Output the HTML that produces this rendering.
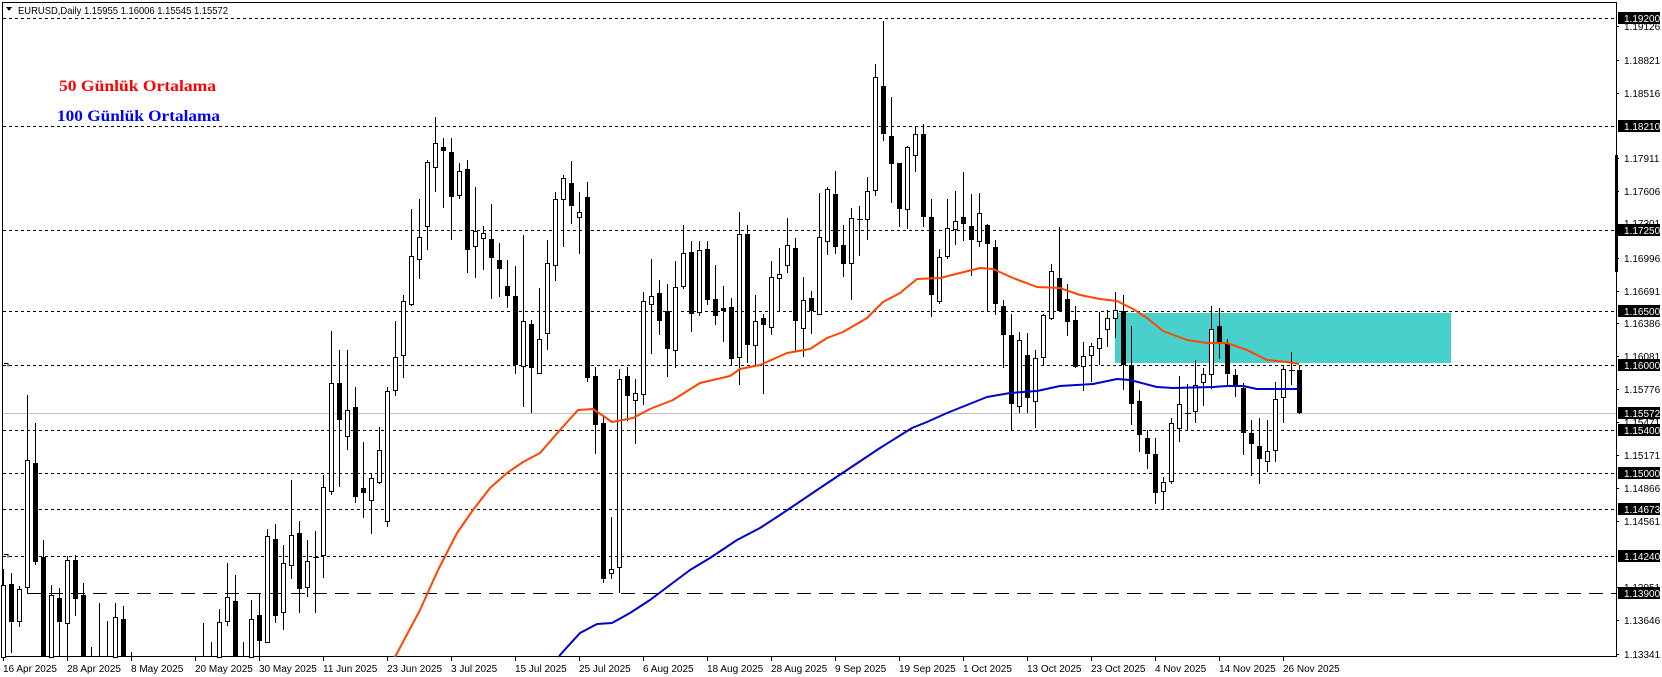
<!DOCTYPE html>
<html><head><meta charset="utf-8"><style>
html,body{margin:0;padding:0;background:#fff;}
svg{display:block;font-family:"Liberation Sans",sans-serif;}
</style></head><body>
<svg width="1662" height="677" viewBox="0 0 1662 677" xmlns="http://www.w3.org/2000/svg" shape-rendering="crispEdges">
<rect width="1662" height="677" fill="#fff"/>
<path d="M2.5 2.5H1616.5V656.5H2.5Z" fill="none" stroke="#000"/>
<rect x="1615" y="155" width="3" height="117" fill="#000"/>
<rect x="1115" y="313" width="336" height="50" fill="#48d1cc"/>
<g stroke="#000" stroke-dasharray="3 3">
<path d="M3 18.5H1616M3 126.5H1616M3 230.5H1616M3 311.5H1616M3 365.5H1616M3 430.5H1616M3 473.5H1616M3 509.5H1616M3 556.5H1616"/>
</g>
<path d="M27 593.5H1616" stroke="#000" stroke-dasharray="14 8"/>
<path d="M27.5 587V593" stroke="#000"/>
<path d="M3 413.5H1616" stroke="#c0c0c0"/>
<path d="M4 363.5h4v3M4 554.5h4v3" stroke="#000" fill="none"/>
<path stroke="#000" fill="none" d="M3.5 569V657M11.5 573V653M19.5 586V627M27.5 395V590M35.5 423V565M43.5 540V657M51.5 585V657M59.5 588V657M67.5 556V657M75.5 555V616M83.5 583V657M91.5 647V657M99.5 603V657M107.5 621V657M115.5 603V657M123.5 606V657M131.5 652V657M203.5 623V657M211.5 642V657M219.5 609V657M227.5 563V626M235.5 575V657M243.5 642V657M251.5 600V657M259.5 593V657M267.5 529V642M275.5 524V623M283.5 545V630M291.5 480V579M299.5 521V613M307.5 540V597M315.5 531V613M323.5 475V578M331.5 331V495M339.5 350V487M347.5 350V450M355.5 387V503M363.5 442V518M371.5 473V534M379.5 427V484M387.5 387V527M395.5 321V396M403.5 295V378M411.5 209V306M419.5 199V279M427.5 160V250M435.5 117V192M443.5 138V208M451.5 138V240M459.5 163V199M467.5 160V273M475.5 187V278M483.5 226V270M491.5 204V299M499.5 243V297M507.5 260V308M515.5 266V374M523.5 235V407M531.5 320V413M539.5 288V374M547.5 240V350M555.5 192V281M563.5 175V247M571.5 161V224M579.5 192V254M587.5 182V382M595.5 367V454M603.5 415V583M611.5 517V579M619.5 369V593M627.5 367V421M635.5 379V444M643.5 292V405M651.5 259V354M659.5 280V335M667.5 284V377M675.5 261V368M683.5 225V289M691.5 241V332M699.5 241V316M707.5 241V305M715.5 265V325M723.5 286V342M731.5 298V365M739.5 212V385M747.5 225V363M755.5 295V365M763.5 314V394M771.5 261V335M779.5 248V311M787.5 218V273M795.5 238V352M803.5 277V357M811.5 291V334M819.5 193V314M827.5 187V255M835.5 171V254M843.5 225V277M851.5 208V300M859.5 206V256M867.5 177V240M875.5 64V196M883.5 21V141M891.5 97V203M899.5 163V227M907.5 146V229M915.5 127V172M923.5 124V227M931.5 199V317M939.5 249V304M947.5 199V259M955.5 191V245M963.5 172V241M971.5 194V276M979.5 193V247M987.5 224V311M995.5 240V315M1003.5 300V368M1011.5 314V430M1019.5 332V413M1027.5 333V413M1035.5 350V428M1043.5 314V365M1051.5 264V320M1059.5 227V311M1067.5 284V336M1075.5 306V368M1083.5 342V391M1091.5 343V382M1099.5 312V365M1107.5 310V347M1115.5 292V338M1123.5 295V390M1131.5 326V425M1139.5 390V452M1147.5 430V469M1155.5 438V504M1163.5 477V509M1171.5 418V484M1179.5 376V442M1187.5 384V430M1195.5 360V423M1203.5 368V406M1211.5 306V389M1219.5 308V359M1227.5 339V386M1235.5 369V397M1243.5 383V455M1251.5 420V476M1259.5 418V484M1267.5 420V472M1275.5 382V462M1283.5 365V423M1291.5 352V385M1299.5 366V414"/>
<path stroke="#000" d="M313 557.5h6M857 219.5h6M1185 413.5h6M1289 370.5h6"/>
<g fill="#000">
<rect x="9" y="584" width="5" height="38"/><rect x="33" y="463" width="5" height="99"/><rect x="41" y="557" width="5" height="100"/><rect x="57" y="598" width="5" height="24"/><rect x="73" y="560" width="5" height="39"/><rect x="81" y="595" width="5" height="62"/><rect x="121" y="619" width="5" height="38"/><rect x="233" y="601" width="5" height="56"/><rect x="257" y="615" width="5" height="26"/><rect x="273" y="539" width="5" height="77"/><rect x="297" y="533" width="5" height="56"/><rect x="337" y="383" width="5" height="37"/><rect x="353" y="407" width="5" height="90"/><rect x="361" y="488" width="5" height="5"/><rect x="441" y="147" width="5" height="4"/><rect x="449" y="152" width="5" height="45"/><rect x="465" y="169" width="5" height="81"/><rect x="489" y="239" width="5" height="19"/><rect x="497" y="260" width="5" height="9"/><rect x="505" y="286" width="5" height="10"/><rect x="513" y="296" width="5" height="69"/><rect x="529" y="324" width="5" height="44"/><rect x="569" y="183" width="5" height="23"/><rect x="585" y="197" width="5" height="181"/><rect x="593" y="376" width="5" height="49"/><rect x="601" y="423" width="5" height="156"/><rect x="625" y="376" width="5" height="20"/><rect x="657" y="293" width="5" height="28"/><rect x="665" y="311" width="5" height="38"/><rect x="689" y="252" width="5" height="62"/><rect x="705" y="249" width="5" height="51"/><rect x="713" y="299" width="5" height="17"/><rect x="721" y="308" width="5" height="3"/><rect x="729" y="307" width="5" height="52"/><rect x="745" y="234" width="5" height="111"/><rect x="761" y="318" width="5" height="7"/><rect x="793" y="248" width="5" height="73"/><rect x="809" y="298" width="5" height="13"/><rect x="833" y="194" width="5" height="53"/><rect x="841" y="245" width="5" height="19"/><rect x="881" y="86" width="5" height="48"/><rect x="889" y="136" width="5" height="28"/><rect x="897" y="163" width="5" height="46"/><rect x="921" y="134" width="5" height="83"/><rect x="929" y="217" width="5" height="78"/><rect x="961" y="217" width="5" height="7"/><rect x="969" y="226" width="5" height="14"/><rect x="985" y="225" width="5" height="19"/><rect x="993" y="247" width="5" height="57"/><rect x="1001" y="306" width="5" height="29"/><rect x="1009" y="335" width="5" height="69"/><rect x="1025" y="355" width="5" height="43"/><rect x="1057" y="278" width="5" height="33"/><rect x="1065" y="299" width="5" height="23"/><rect x="1073" y="320" width="5" height="47"/><rect x="1121" y="311" width="5" height="54"/><rect x="1129" y="365" width="5" height="39"/><rect x="1137" y="401" width="5" height="34"/><rect x="1145" y="438" width="5" height="16"/><rect x="1153" y="454" width="5" height="39"/><rect x="1217" y="326" width="5" height="17"/><rect x="1225" y="343" width="5" height="31"/><rect x="1233" y="375" width="5" height="12"/><rect x="1241" y="388" width="5" height="45"/><rect x="1249" y="433" width="5" height="11"/><rect x="1257" y="446" width="5" height="13"/><rect x="1297" y="370" width="5" height="43"/>
</g>
<g fill="#fff" stroke="#000">
<rect x="1.5" y="585.5" width="4" height="72"/><rect x="17.5" y="589.5" width="4" height="32"/><rect x="25.5" y="460.5" width="4" height="127"/><rect x="49.5" y="595.5" width="4" height="62"/><rect x="65.5" y="560.5" width="4" height="63"/><rect x="113.5" y="617.5" width="4" height="40"/><rect x="217.5" y="622.5" width="4" height="35"/><rect x="225.5" y="597.5" width="4" height="24"/><rect x="249.5" y="619.5" width="4" height="38"/><rect x="265.5" y="536.5" width="4" height="106"/><rect x="281.5" y="563.5" width="4" height="49"/><rect x="289.5" y="535.5" width="4" height="30"/><rect x="305.5" y="561.5" width="4" height="26"/><rect x="321.5" y="487.5" width="4" height="68"/><rect x="329.5" y="383.5" width="4" height="108"/><rect x="345.5" y="410.5" width="4" height="26"/><rect x="369.5" y="478.5" width="4" height="22"/><rect x="377.5" y="450.5" width="4" height="32"/><rect x="385.5" y="391.5" width="4" height="130"/><rect x="393.5" y="357.5" width="4" height="33"/><rect x="401.5" y="301.5" width="4" height="54"/><rect x="409.5" y="256.5" width="4" height="48"/><rect x="417.5" y="237.5" width="4" height="22"/><rect x="425.5" y="162.5" width="4" height="64"/><rect x="433.5" y="143.5" width="4" height="24"/><rect x="457.5" y="171.5" width="4" height="24"/><rect x="473.5" y="231.5" width="4" height="15"/><rect x="481.5" y="233.5" width="4" height="5"/><rect x="521.5" y="321.5" width="4" height="45"/><rect x="537.5" y="339.5" width="4" height="34"/><rect x="545.5" y="263.5" width="4" height="70"/><rect x="553.5" y="199.5" width="4" height="66"/><rect x="561.5" y="178.5" width="4" height="21"/><rect x="577.5" y="212.5" width="4" height="5"/><rect x="609.5" y="569.5" width="4" height="4"/><rect x="617.5" y="379.5" width="4" height="188"/><rect x="633.5" y="393.5" width="4" height="7"/><rect x="641.5" y="301.5" width="4" height="93"/><rect x="649.5" y="296.5" width="4" height="8"/><rect x="673.5" y="287.5" width="4" height="63"/><rect x="681.5" y="253.5" width="4" height="33"/><rect x="697.5" y="250.5" width="4" height="62"/><rect x="737.5" y="234.5" width="4" height="123"/><rect x="753.5" y="321.5" width="4" height="24"/><rect x="769.5" y="277.5" width="4" height="50"/><rect x="777.5" y="274.5" width="4" height="4"/><rect x="785.5" y="245.5" width="4" height="20"/><rect x="801.5" y="300.5" width="4" height="28"/><rect x="817.5" y="237.5" width="4" height="77"/><rect x="825.5" y="189.5" width="4" height="52"/><rect x="849.5" y="218.5" width="4" height="45"/><rect x="865.5" y="191.5" width="4" height="28"/><rect x="873.5" y="77.5" width="4" height="113"/><rect x="905.5" y="147.5" width="4" height="62"/><rect x="913.5" y="134.5" width="4" height="21"/><rect x="937.5" y="257.5" width="4" height="44"/><rect x="945.5" y="228.5" width="4" height="28"/><rect x="953.5" y="221.5" width="4" height="8"/><rect x="977.5" y="213.5" width="4" height="28"/><rect x="1017.5" y="340.5" width="4" height="66"/><rect x="1033.5" y="358.5" width="4" height="43"/><rect x="1041.5" y="315.5" width="4" height="42"/><rect x="1049.5" y="271.5" width="4" height="47"/><rect x="1081.5" y="356.5" width="4" height="10"/><rect x="1089.5" y="346.5" width="4" height="9"/><rect x="1097.5" y="338.5" width="4" height="10"/><rect x="1105.5" y="318.5" width="4" height="11"/><rect x="1113.5" y="310.5" width="4" height="8"/><rect x="1161.5" y="482.5" width="4" height="9"/><rect x="1169.5" y="423.5" width="4" height="58"/><rect x="1177.5" y="404.5" width="4" height="24"/><rect x="1193.5" y="385.5" width="4" height="26"/><rect x="1201.5" y="374.5" width="4" height="8"/><rect x="1209.5" y="329.5" width="4" height="45"/><rect x="1265.5" y="451.5" width="4" height="10"/><rect x="1273.5" y="399.5" width="4" height="51"/><rect x="1281.5" y="369.5" width="4" height="28"/>
</g>
<g fill="none" stroke-width="2" shape-rendering="auto" stroke-linejoin="round">
<polyline stroke="#ff4500" points="395,657 420,610 438,570 457,533 473,510 490,488 507,473 523,462 540,453 560,430 578,410 593,409 612,422 633,418 650,409 673,400 700,383 730,376 740,369 760,365 787,353 810,349 827,338 843,332 867,318 883,302 900,293 917,279 940,278 960,273 980,268 993,269 1013,278 1037,287 1060,288 1080,295 1100,299 1117,301 1133,309 1147,318 1163,331 1187,340 1207,343 1227,343 1247,350 1267,360 1287,362 1299,364"/>
<polyline stroke="#0000cd" points="559,657 560,655 580,633 597,624 612,623 630,613 650,600 670,585 690,570 710,558 737,540 760,528 780,515 820,488 850,468 880,448 912,428 927,422 947,413 967,405 987,397 1010,393 1037,391 1060,386 1093,384 1117,379 1130,380 1157,387 1173,388 1213,387 1227,386 1243,386 1257,389 1299,389"/>
</g>
<path d="M6 7h6l-3 4z" fill="#000"/>
<text x="18" y="14" font-size="10.5" fill="#000" textLength="210" lengthAdjust="spacingAndGlyphs">EURUSD,Daily  1.15955 1.16006 1.15545 1.15572</text>
<text x="59" y="91" font-family="Liberation Serif,serif" font-size="16" font-weight="bold" fill="#ff0000" textLength="157" lengthAdjust="spacingAndGlyphs">50 Günlük Ortalama</text>
<text x="57" y="121" font-family="Liberation Serif,serif" font-size="16" font-weight="bold" fill="#0000ff" textLength="163" lengthAdjust="spacingAndGlyphs">100 Günlük Ortalama</text>
<g stroke="#000">
<path d="M1616 26.5h3M1616 60.5h3M1616 93.5h3M1616 158.5h3M1616 191.5h3M1616 224.5h3M1616 258.5h3M1616 291.5h3M1616 323.5h3M1616 356.5h3M1616 389.5h3M1616 422.5h3M1616 455.5h3M1616 488.5h3M1616 521.5h3M1616 587.5h3M1616 620.5h3M1616 654.5h3"/>
</g>
<g font-size="10" fill="#000">
<text x="1624" y="30">1.19126</text><text x="1624" y="64">1.18821</text><text x="1624" y="97">1.18516</text><text x="1624" y="162">1.17911</text><text x="1624" y="195">1.17606</text><text x="1624" y="227">1.17301</text><text x="1624" y="262">1.16996</text><text x="1624" y="295">1.16691</text><text x="1624" y="327">1.16386</text><text x="1624" y="360">1.16081</text><text x="1624" y="393">1.15776</text><text x="1624" y="426">1.15471</text><text x="1624" y="459">1.15171</text><text x="1624" y="492">1.14866</text><text x="1624" y="525">1.14561</text><text x="1624" y="591">1.13951</text><text x="1624" y="624">1.13646</text><text x="1624" y="658">1.13341</text>
</g>
<g fill="#000">
<rect x="1618" y="12" width="42" height="12"/><rect x="1618" y="120" width="42" height="12"/><rect x="1618" y="224" width="42" height="12"/><rect x="1618" y="305" width="42" height="12"/><rect x="1618" y="359" width="42" height="12"/><rect x="1618" y="407" width="42" height="12"/><rect x="1618" y="424" width="42" height="12"/><rect x="1618" y="467" width="42" height="12"/><rect x="1618" y="503" width="42" height="12"/><rect x="1618" y="550" width="42" height="12"/><rect x="1618" y="587" width="42" height="12"/>
</g>
<g font-size="10" fill="#fff">
<text x="1624" y="22">1.19200</text><text x="1624" y="130">1.18210</text><text x="1624" y="234">1.17250</text><text x="1624" y="315">1.16500</text><text x="1624" y="369">1.16000</text><text x="1624" y="417">1.15572</text><text x="1624" y="434">1.15400</text><text x="1624" y="477">1.15000</text><text x="1624" y="513">1.14673</text><text x="1624" y="560">1.14240</text><text x="1624" y="597">1.13900</text>
</g>
<path stroke="#000" d="M3.5 657v4M67.5 657v4M131.5 657v4M195.5 657v4M259.5 657v4M323.5 657v4M387.5 657v4M451.5 657v4M515.5 657v4M579.5 657v4M643.5 657v4M707.5 657v4M771.5 657v4M835.5 657v4M899.5 657v4M963.5 657v4M1027.5 657v4M1091.5 657v4M1155.5 657v4M1219.5 657v4M1283.5 657v4"/>
<g font-size="10" fill="#000">
<text x="3" y="672">16 Apr 2025</text><text x="67" y="672">28 Apr 2025</text><text x="131" y="672">8 May 2025</text><text x="195" y="672">20 May 2025</text><text x="259" y="672">30 May 2025</text><text x="323" y="672">11 Jun 2025</text><text x="387" y="672">23 Jun 2025</text><text x="451" y="672">3 Jul 2025</text><text x="515" y="672">15 Jul 2025</text><text x="579" y="672">25 Jul 2025</text><text x="643" y="672">6 Aug 2025</text><text x="707" y="672">18 Aug 2025</text><text x="771" y="672">28 Aug 2025</text><text x="835" y="672">9 Sep 2025</text><text x="899" y="672">19 Sep 2025</text><text x="963" y="672">1 Oct 2025</text><text x="1027" y="672">13 Oct 2025</text><text x="1091" y="672">23 Oct 2025</text><text x="1155" y="672">4 Nov 2025</text><text x="1219" y="672">14 Nov 2025</text><text x="1283" y="672">26 Nov 2025</text>
</g>
</svg>
</body></html>
